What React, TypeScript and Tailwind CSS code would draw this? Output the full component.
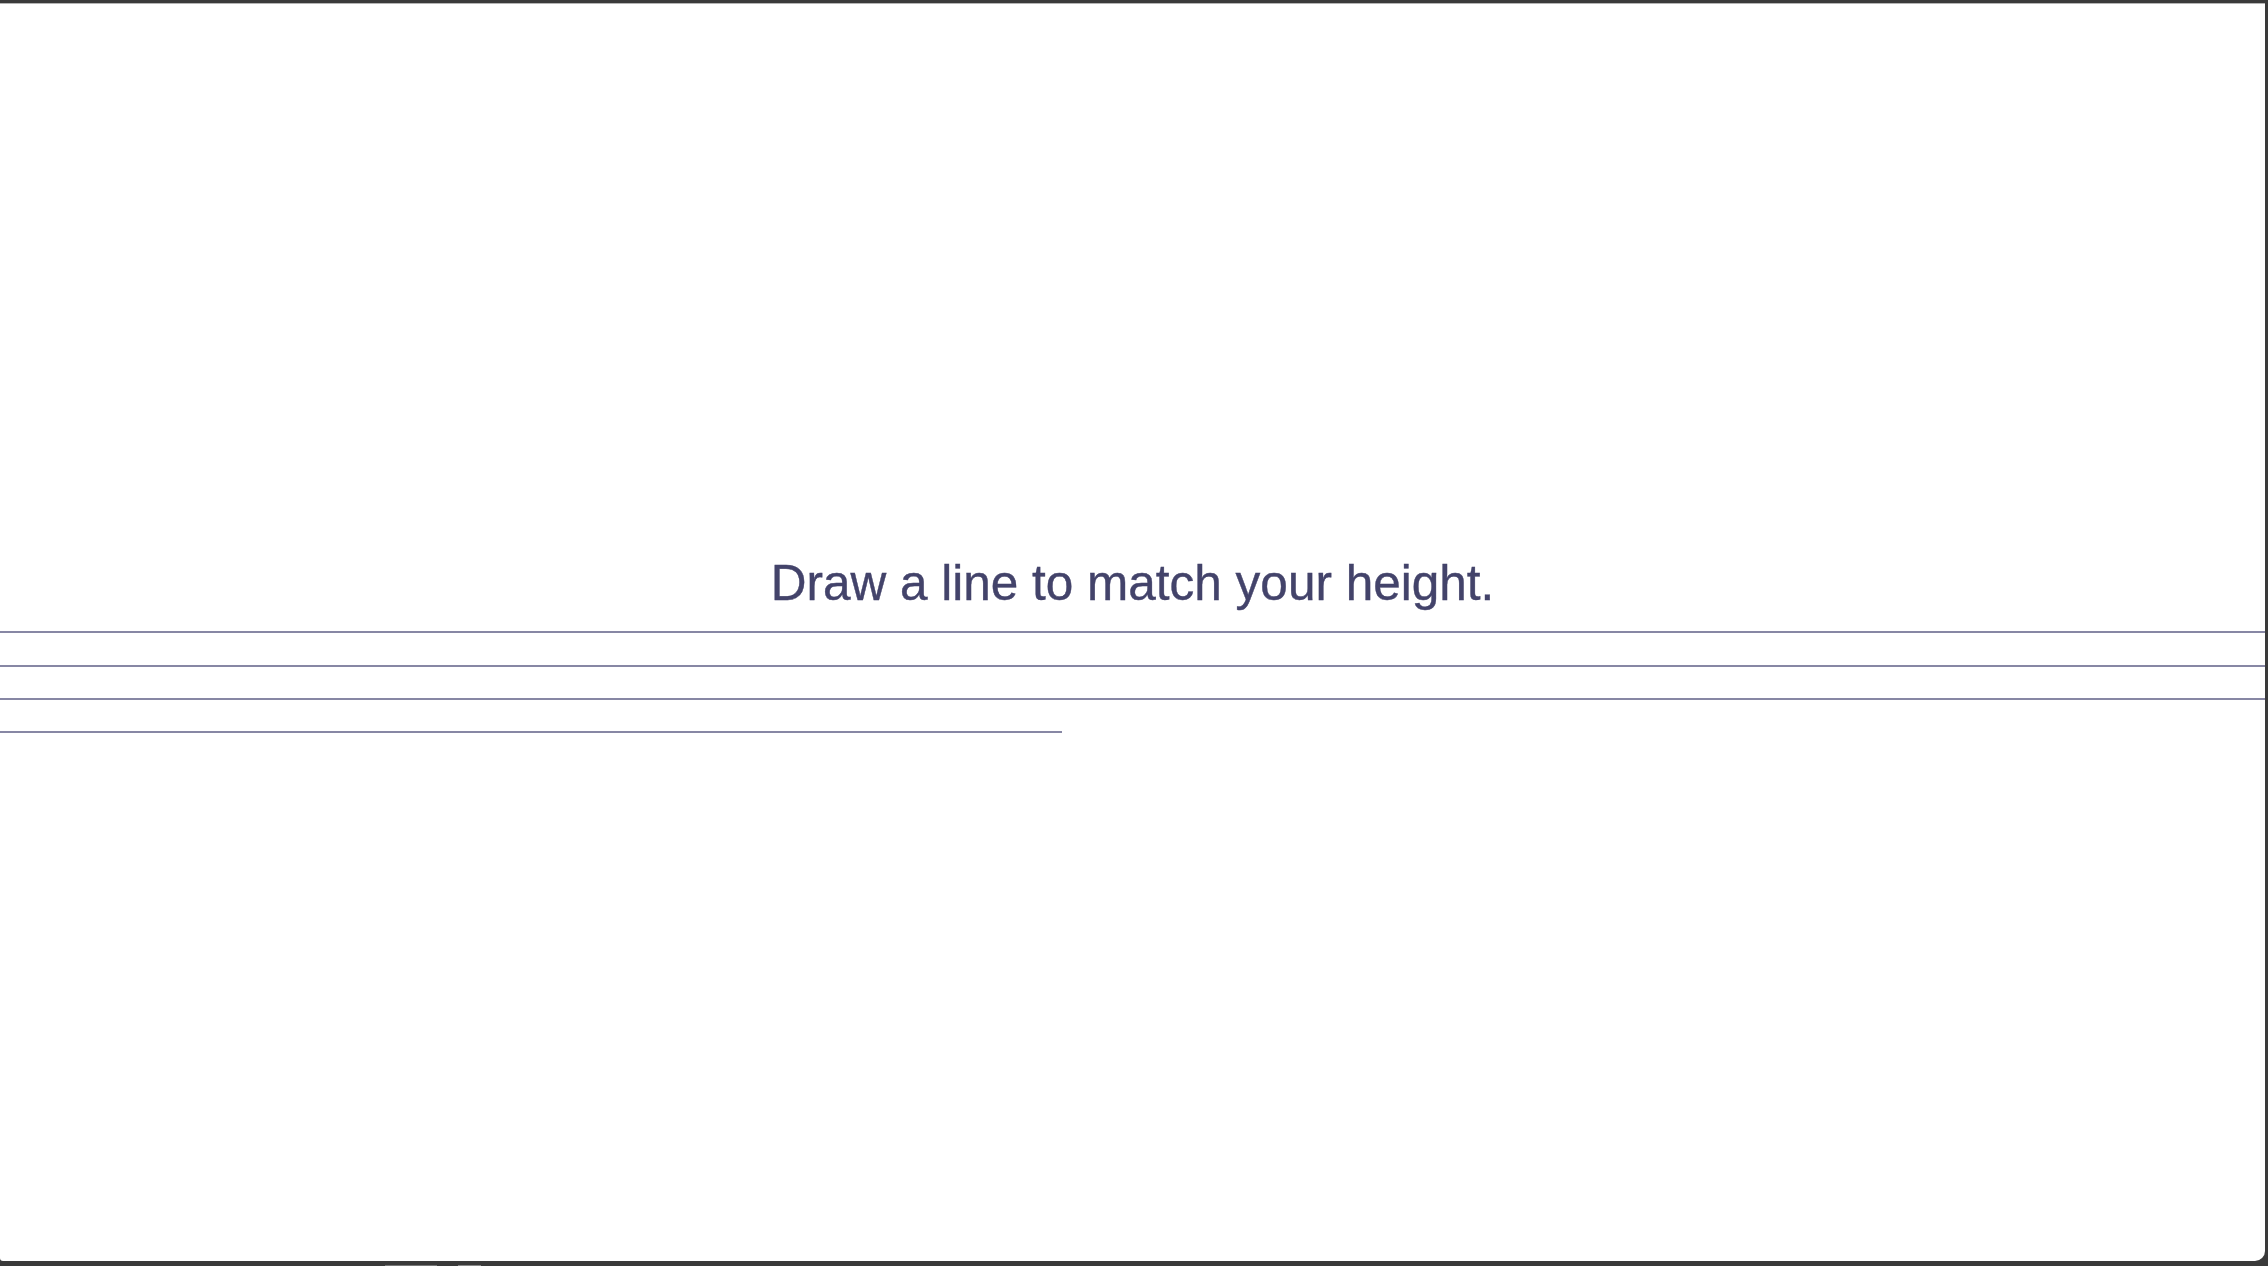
export default function App() {
 return (
  <div className="w-[2268px] h-[1266px] bg-[#3a3a3a] flex flex-col overflow-hidden">
   <div className="flex-1 mt-[3px] mr-[3px] mb-[4px] bg-white border-t border-[#b5b5b5] rounded-bl-[3px] rounded-br-[10px] flex flex-col">
    <p className="mt-[551px] text-center text-[49.5px] leading-[56px] text-[#43436a] [-webkit-text-stroke:0.4px_#43436a] font-['Liberation_Sans',Arial,sans-serif]">
     Draw a line to match your height.
    </p>
    <div className="mt-[20px] flex flex-col">
     <div className="h-[2px] bg-[#8787a4]" />
     <div className="h-[2px] bg-[#8787a4] mt-[32px]" />
     <div className="h-[2px] bg-[#8787a4] mt-[31px]" />
     <div className="h-[2px] bg-[#8787a4] mt-[31px] w-[1062px]" />
    </div>
   </div>
   <div className="h-[1px] flex ml-[385px] gap-[21px]">
    <div className="w-[52px] bg-[#777]" />
    <div className="w-[23px] bg-[#888]" />
   </div>
  </div>
 );
}
